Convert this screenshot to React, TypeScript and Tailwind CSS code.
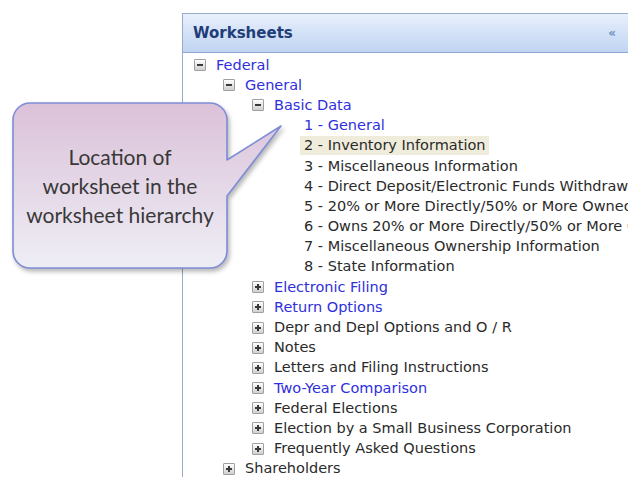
import React from 'react';

type Row = {
  level: number;
  label: string;
  toggle?: 'open' | 'closed';
  link?: boolean;
  selected?: boolean;
};

const rows: Row[] = [
  { level: 0, label: 'Federal', toggle: 'open', link: true },
  { level: 1, label: 'General', toggle: 'open', link: true },
  { level: 2, label: 'Basic Data', toggle: 'open', link: true },
  { level: 3, label: '1 - General', link: true },
  { level: 3, label: '2 - Inventory Information', selected: true },
  { level: 3, label: '3 - Miscellaneous Information' },
  { level: 3, label: '4 - Direct Deposit/Electronic Funds Withdrawal' },
  { level: 3, label: '5 - 20% or More Directly/50% or More Owned' },
  { level: 3, label: '6 - Owns 20% or More Directly/50% or More Owned' },
  { level: 3, label: '7 - Miscellaneous Ownership Information' },
  { level: 3, label: '8 - State Information' },
  { level: 2, label: 'Electronic Filing', toggle: 'closed', link: true },
  { level: 2, label: 'Return Options', toggle: 'closed', link: true },
  { level: 2, label: 'Depr and Depl Options and O / R', toggle: 'closed' },
  { level: 2, label: 'Notes', toggle: 'closed' },
  { level: 2, label: 'Letters and Filing Instructions', toggle: 'closed' },
  { level: 2, label: 'Two-Year Comparison', toggle: 'closed', link: true },
  { level: 2, label: 'Federal Elections', toggle: 'closed' },
  { level: 2, label: 'Election by a Small Business Corporation', toggle: 'closed' },
  { level: 2, label: 'Frequently Asked Questions', toggle: 'closed' },
  { level: 1, label: 'Shareholders', toggle: 'closed' },
];

const indent = ['pl-[11px]', 'pl-[40px]', 'pl-[69px]', 'pl-[99px]'];

function Expander({ state }: { state?: 'open' | 'closed' }) {
  if (!state) return <span className="w-[12px] h-[12px] mr-[10px] shrink-0" />;
  return (
    <span className="relative w-[12px] h-[12px] mr-[10px] shrink-0 border border-[#a0a0a0] rounded-[1px] bg-gradient-to-b from-white to-[#d0d0d0]">
      <span className="absolute left-[2px] top-[4px] w-[6px] h-[2px] bg-[#3a3a3a]" />
      {state === 'closed' && <span className="absolute left-[4px] top-[2px] w-[2px] h-[6px] bg-[#3a3a3a]" />}
    </span>
  );
}

function Callout() {
  return (
    <div className="absolute left-0 top-0 w-[300px] h-[290px] pointer-events-none">
      <svg width="300" height="290" className="drop-shadow-[2px_3px_2px_rgba(0,0,0,0.28)]">
        <defs>
          <linearGradient id="bubble" x1="0" y1="0" x2="0" y2="1">
            <stop offset="0" stopColor="#dbc1d9" />
            <stop offset="1" stopColor="#eeeef5" />
          </linearGradient>
        </defs>
        <path
          d="M30 103 H210 A17 17 0 0 1 227 120 V160 L281 126 L227 196 V251 A17 17 0 0 1 210 268 H30 A17 17 0 0 1 13 251 V120 A17 17 0 0 1 30 103 Z"
          fill="url(#bubble)"
          stroke="#7e8dd6"
          strokeWidth="1.6"
          strokeLinejoin="round"
        />
      </svg>
      <div className="absolute left-[10px] top-[142px] w-[220px] text-center text-[21px] leading-[29px] text-[#383838] font-['Lato','Liberation_Sans',sans-serif]">
        Location of
        <br />
        worksheet in the
        <br />
        worksheet hierarchy
      </div>
    </div>
  );
}

export default function App() {
  return (
    <div className="relative w-[628px] h-[477px] overflow-hidden bg-white">
      <div className="ml-[182px] mt-[13px] h-[464px] border-l border-t border-[#98abc9] font-['DejaVu_Sans',sans-serif]">
        <div className="h-[39px] flex items-center justify-between pl-[10px] pr-[12px] bg-gradient-to-b from-[#e8f0fc] to-[#c0d4f2] border-b border-[#8faad4]">
          <span className="text-[15px] font-bold text-[#1f3d78]">Worksheets</span>
          <span className="text-[12px] font-bold text-[#7090c0]">«</span>
        </div>
        <div className="pt-[2px]">
          {rows.map((r) => (
            <div key={r.label} className={`h-[20.2px] flex items-center whitespace-nowrap ${indent[r.level]}`}>
              <Expander state={r.toggle} />
              <span
                className={`text-[14.5px] leading-[19px] ${r.link ? 'text-[#2f2fdc]' : 'text-[#2a2a2a]'} ${
                  r.selected ? 'bg-[#efecdc] -ml-[4px] px-[4px]' : ''
                }`}
              >
                {r.label}
              </span>
            </div>
          ))}
        </div>
      </div>
      <Callout />
    </div>
  );
}
